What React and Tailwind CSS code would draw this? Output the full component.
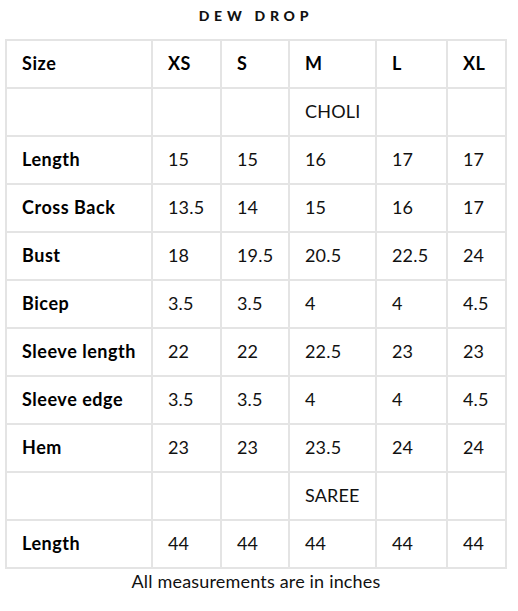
const sizes = ['XS', 'S', 'M', 'L', 'XL'];

const rows = [
  { section: 'CHOLI' },
  { label: 'Length', values: ['15', '15', '16', '17', '17'] },
  { label: 'Cross Back', values: ['13.5', '14', '15', '16', '17'] },
  { label: 'Bust', values: ['18', '19.5', '20.5', '22.5', '24'] },
  { label: 'Bicep', values: ['3.5', '3.5', '4', '4', '4.5'] },
  { label: 'Sleeve length', values: ['22', '22', '22.5', '23', '23'] },
  { label: 'Sleeve edge', values: ['3.5', '3.5', '4', '4', '4.5'] },
  { label: 'Hem', values: ['23', '23', '23.5', '24', '24'] },
  { section: 'SAREE' },
  { label: 'Length', values: ['44', '44', '44', '44', '44'] },
];

const cell = 'h-[48px] border border-[#e4e4e4] pl-[15px] pb-[2px] flex items-center text-[18px]';
const head = `${cell} font-bold tracking-[0.03em] text-black`;
const body = `${cell} tracking-[0.01em]`;

export default function App() {
  return (
    <div className="min-h-screen bg-white font-['Lato',sans-serif] text-[#111]">
      <div className="ml-[5px] w-[502px]">
        <h1 className="pt-[5px] h-[39px] text-center text-[14px] font-black tracking-[0.34em] text-[#111]">
          DEW DROP
        </h1>

        <div className="border border-[#e4e4e4] grid grid-cols-[146px_69px_68px_87px_71px_59px]">
          <div className={head}>Size</div>
          {sizes.map((s) => (
            <div key={s} className={head}>
              {s}
            </div>
          ))}

          {rows.map((row, i) =>
            row.section ? (
              <div key={i} className="contents">
                <div className={cell} />
                <div className={cell} />
                <div className={cell} />
                <div className={body}>{row.section}</div>
                <div className={cell} />
                <div className={cell} />
              </div>
            ) : (
              <div key={i} className="contents">
                <div className={head}>{row.label}</div>
                {row.values.map((v, j) => (
                  <div key={j} className={body}>
                    {v}
                  </div>
                ))}
              </div>
            )
          )}
        </div>

        <p className="text-center text-[18px] leading-[22px] mt-[1px] tracking-[0.01em] text-[#111]">
          All measurements are in inches
        </p>
      </div>
    </div>
  );
}
